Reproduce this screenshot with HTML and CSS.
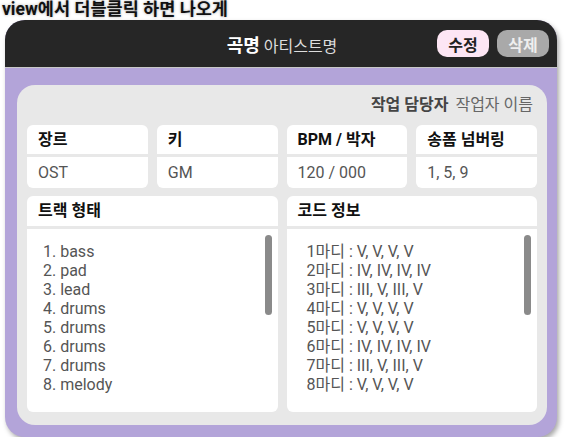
FILE: index.html
```html
<!DOCTYPE html>
<html lang="ko">
<head>
    <meta charset="UTF-8">
    <title>곡 정보</title>
    <link rel="stylesheet" href="styles.css">
</head>
<body>
    <h1 class="page-title">view에서 더블클릭 하면 나오게</h1>
    <div class="window">
        <div class="window-header">
            <div></div>
            <div class="song-title">
                <span class="song-name">곡명</span>
                <span class="artist">아티스트명</span>
            </div>
            <div class="header-buttons">
                <button class="btn-edit">수정</button>
                <button class="btn-delete">삭제</button>
            </div>
        </div>
        <div class="window-body">
            <div class="panel">
                <div class="owner">
                    <span class="owner-label">작업 담당자</span>
                    <span class="owner-name">작업자 이름</span>
                </div>
                <div class="info-row">
                    <div class="info-card">
                        <div class="card-label">장르</div>
                        <div class="card-value">OST</div>
                    </div>
                    <div class="info-card">
                        <div class="card-label">키</div>
                        <div class="card-value">GM</div>
                    </div>
                    <div class="info-card">
                        <div class="card-label">BPM / 박자</div>
                        <div class="card-value">120 / 000</div>
                    </div>
                    <div class="info-card">
                        <div class="card-label">송폼 넘버링</div>
                        <div class="card-value">1, 5, 9</div>
                    </div>
                </div>
                <div class="list-row">
                    <div class="info-card">
                        <div class="card-label big">트랙 형태</div>
                        <div class="card-list track-list">
                            <div>1. bass</div>
                            <div>2. pad</div>
                            <div>3. lead</div>
                            <div>4. drums</div>
                            <div>5. drums</div>
                            <div>6. drums</div>
                            <div>7. drums</div>
                            <div>8. melody</div>
                            <span class="scroll-thumb"></span>
                        </div>
                    </div>
                    <div class="info-card">
                        <div class="card-label big">코드 정보</div>
                        <div class="card-list chord-list">
                            <div>1마디 : V, V, V, V</div>
                            <div>2마디 : IV, IV, IV, IV</div>
                            <div>3마디 : III, V, III, V</div>
                            <div>4마디 : V, V, V, V</div>
                            <div>5마디 : V, V, V, V</div>
                            <div>6마디 : IV, IV, IV, IV</div>
                            <div>7마디 : III, V, III, V</div>
                            <div>8마디 : V, V, V, V</div>
                            <span class="scroll-thumb"></span>
                        </div>
                    </div>
                </div>
            </div>
        </div>
    </div>
</body>
</html>
```

FILE: styles.css
```css
body {
    margin: 0;
    background-color: white;
    font-family: Roboto, "Noto Sans CJK KR", sans-serif;
    color: #222;
}
.page-title {
    margin: 0 0 0 2px;
    font-size: 17.5px;
    line-height: 18px;
    height: 20px;
    font-weight: 700;
    color: #111;
    text-shadow: 0 0 3px rgba(0,0,0,0.35);
}
.window {
    width: 552px;
    margin-left: 5px;
    border-radius: 20px;
    overflow: hidden;
    background-color: #b3a4d9;
    box-shadow: 2px 3px 5px rgba(0,0,0,0.35);
}
.window-header {
    display: grid;
    grid-template-columns: 1fr auto 1fr;
    align-items: center;
    height: 47px;
    background-color: #262626;
    border-bottom: 1px solid #c8c8c8;
}
.song-title {
    color: white;
    padding-left: 2px;
}
.song-name {
    font-size: 18px;
    font-weight: 700;
}
.artist {
    font-size: 16px;
    color: #ddd;
}
.header-buttons {
    display: flex;
    justify-content: flex-end;
    gap: 8px;
    padding-right: 8px;
}
.header-buttons button {
    font-family: inherit;
    font-size: 16px;
    font-weight: 700;
    border: none;
    border-radius: 10px;
    width: 52px;
    height: 27px;
    padding: 0;
    cursor: pointer;
}
.btn-edit {
    background-color: #fde6f4;
    color: #222;
}
.btn-delete {
    background-color: #a9a9a9;
    color: #efefef;
}
.window-body {
    padding: 17px 10px 12px 12px;
}
.panel {
    background-color: #e8e8e8;
    border-radius: 18px;
    padding: 10px 10px 13px 10px;
}
.owner {
    text-align: right;
    font-size: 16px;
    line-height: 20px;
    margin-bottom: 10px;
    padding-right: 4px;
}
.owner-label {
    font-weight: 700;
    color: #444;
    margin-right: 3px;
}
.owner-name {
    color: #666;
}
.info-row {
    display: grid;
    grid-template-columns: repeat(4, 1fr);
    gap: 9px;
}
.list-row {
    display: grid;
    grid-template-columns: 1fr 1fr;
    gap: 9px;
    margin-top: 8px;
}
.info-card {
    display: flex;
    flex-direction: column;
    gap: 3px;
}
.card-label {
    background-color: white;
    border-radius: 6px 6px 0 0;
    height: 29px;
    line-height: 29px;
    padding-left: 11px;
    font-size: 16px;
    font-weight: 700;
    color: #111;
}
.card-label.big {
    height: 30px;
    line-height: 30px;
}
.card-value {
    background-color: white;
    border-radius: 0 0 6px 6px;
    height: 31px;
    line-height: 31px;
    padding-left: 11px;
    font-size: 16px;
    color: #555;
}
.card-list {
    position: relative;
    background-color: white;
    border-radius: 0 0 6px 6px;
    height: 183px;
    box-sizing: border-box;
    padding-top: 13px;
    font-size: 16px;
    line-height: 19px;
    color: #555;
}
.track-list {
    padding-left: 16px;
}
.chord-list {
    padding-left: 20px;
}
.scroll-thumb {
    position: absolute;
    top: 6px;
    right: 6px;
    width: 7px;
    height: 80px;
    border-radius: 4px;
    background-color: #8a8a8a;
}
```
